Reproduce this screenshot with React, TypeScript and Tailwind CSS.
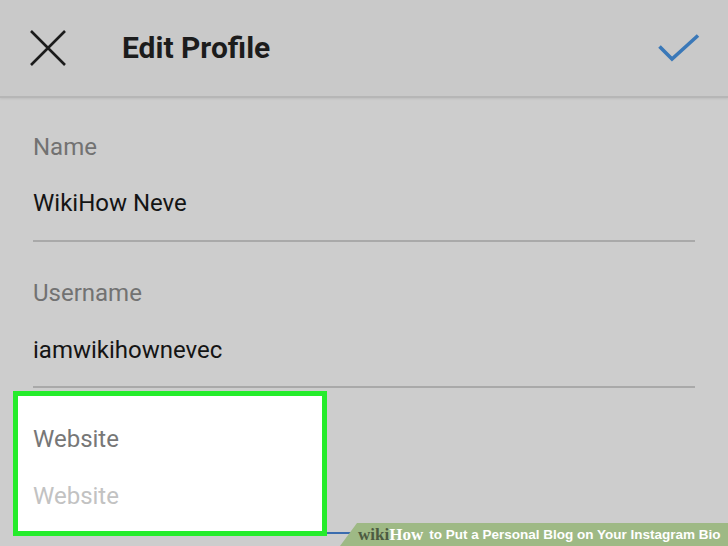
export default function App() {
  return (
    <div className="relative w-[728px] h-[546px] overflow-hidden bg-[#cdcdcd] font-['Roboto',sans-serif]">
      {/* Top bar */}
      <header className="flex h-[98px] items-center border-b-2 border-[#b6b6b6] bg-[#c9c9c9] shadow-[0_1px_2px_rgba(0,0,0,0.08)]">
        <svg className="ml-[30px]" width="36" height="36" viewBox="0 0 36 36">
          <path d="M1 1L35 35M35 1L1 35" stroke="#1b1b1b" strokeWidth="2.6" fill="none" />
        </svg>
        <h1 className="ml-[56px] text-[30px] leading-[36px] font-bold text-[#1c1c1c]">Edit Profile</h1>
        <svg className="ml-auto mr-[28px]" width="42" height="28" viewBox="0 0 42 28">
          <path d="M1.5 12.5L14 25L40 1.5" stroke="#3a78b8" strokeWidth="3.6" fill="none" />
        </svg>
      </header>

      {/* Form */}
      <div className="px-[33px]">
        <div className="pt-[35px]">
          <p className="text-[24px] leading-[28px] text-[#727272]">Name</p>
          <p className="mt-[28px] text-[24px] leading-[28px] text-[#141414]">WikiHow Neve</p>
          <div className="mt-[23px] h-[2px] bg-[#a9a9a9]" />
        </div>

        <div className="pt-[37px]">
          <p className="text-[24px] leading-[28px] text-[#727272]">Username</p>
          <p className="mt-[29px] text-[24px] leading-[28px] text-[#141414]">iamwikihownevec</p>
          <div className="mt-[22px] h-[2px] bg-[#a9a9a9]" />
        </div>

        <div className="relative z-10 mt-[3px] -ml-[20px] h-[145px] w-[314px] border-[5px] border-[#25ec2b] bg-white pl-[15px] pt-[29px]">
          <p className="text-[24px] leading-[28px] text-[#777777]">Website</p>
          <p className="mt-[29px] text-[24px] leading-[28px] text-[#c2c2c2]">Website</p>
        </div>
        <div className="-mt-[4px] h-[2px] bg-[#3b6cae]" />
      </div>

      {/* wikiHow caption */}
      <div className="absolute bottom-0 right-0 flex h-[23px] w-[388px] items-center whitespace-nowrap bg-[#9eb985] pl-[18px] [clip-path:polygon(17px_0,100%_0,100%_100%,0_100%)]">
        <span className="font-['Liberation_Serif',serif] text-[17px] font-bold leading-none text-[#4c5b41]">wiki</span>
        <span className="font-['Liberation_Serif',serif] text-[17px] font-bold leading-none text-white">How</span>
        <span className="ml-[6px] font-['Liberation_Sans',sans-serif] text-[13.5px] font-bold leading-none text-white">
          to Put a Personal Blog on Your Instagram Bio
        </span>
      </div>
    </div>
  );
}
